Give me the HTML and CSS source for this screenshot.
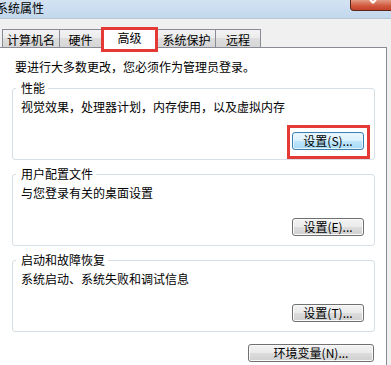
FILE: index.html
```html
<!DOCTYPE html>
<html lang="zh-CN">
<head>
<meta charset="utf-8">
<title>系统属性</title>
<link rel="stylesheet" href="styles.css">
</head>
<body>
<div class="titlebar">
  <span class="title">系统属性</span>
  <div class="close">
    <svg class="close-x" width="14" height="8" viewBox="0 0 14 8"><path d="M3 -3 L8 3 M13 -3 L8 3" stroke="#fff" stroke-width="2" fill="none"/></svg>
  </div>
</div>
<div class="window">
  <div class="tabs">
    <div class="tab t1">计算机名</div>
    <div class="tab t2">硬件</div>
    <div class="tab active">高级<span class="mark mark-tab"></span></div>
    <div class="tab t4">系统保护</div>
    <div class="tab t5">远程</div>
  </div>
  <div class="panel">
    <div class="intro">要进行大多数更改，您必须作为管理员登录。</div>
    <fieldset class="group">
      <legend>性能</legend>
      <div class="desc">视觉效果，处理器计划，内存使用，以及虚拟内存</div>
      <div class="actions"><button class="btn btn-hot">设置(S)...<span class="mark mark-btn"></span></button></div>
    </fieldset>
    <fieldset class="group">
      <legend>用户配置文件</legend>
      <div class="desc">与您登录有关的桌面设置</div>
      <div class="actions"><button class="btn">设置(E)...</button></div>
    </fieldset>
    <fieldset class="group">
      <legend>启动和故障恢复</legend>
      <div class="desc">系统启动、系统失败和调试信息</div>
      <div class="actions"><button class="btn">设置(T)...</button></div>
    </fieldset>
    <div class="env-row"><button class="btn btn-env">环境变量(N)...</button></div>
  </div>
</div>
</body>
</html>
```

FILE: styles.css
```css
* { box-sizing: border-box; }
html, body { margin: 0; padding: 0; }
body {
  width: 391px;
  height: 365px;
  overflow: hidden;
  background: #f0f0f0;
  font-family: "Noto Sans CJK SC", "Noto Sans", sans-serif;
  font-size: 12px;
  color: #000;
  position: relative;
}
.titlebar {
  height: 19px;
  background: linear-gradient(#d3e3f3, #c3d7ec);
  border-bottom: 1px solid #b6c6d6;
  position: relative;
}
.title {
  display: block;
  margin-left: -4px;
  line-height: 15px;
  font-size: 12px;
  letter-spacing: 0;
}
.close {
  position: absolute;
  top: 0;
  right: -6px;
  width: 47px;
  height: 11px;
  background: linear-gradient(#e39a84, #d0573b 60%, #c2432a);
  border: 1px solid #5e2417;
  border-top: none;
  border-bottom-left-radius: 4px;
}
.close-x { position: absolute; left: 14px; top: 0; }
.window { padding-top: 8px; }
.tabs {
  display: flex;
  align-items: flex-end;
  height: 20px;
  padding-left: 2px;
  position: relative;
  z-index: 2;
}
.tab {
  height: 18px;
  border: 1px solid #898c95;
  border-bottom: none;
  background: linear-gradient(#f3f3f3, #ebebeb 50%, #dddddd 50%, #d6d6d6);
  text-align: center;
  line-height: 18px;
  padding-top: 1px;
  white-space: nowrap;
}
.t1 { width: 58px; }
.t2 { width: 43px; margin-left: -1px; }
.active {
  width: 57px;
  height: 21px;
  margin-left: -1px;
  margin-bottom: -1px;
  background: #fff;
  line-height: 18px;
  padding-top: 1px;
  position: relative;
  z-index: 3;
}
.t4 { width: 59px; margin-left: -1px; }
.t5 { width: 46px; margin-left: -1px; }
.mark {
  position: absolute;
  border: 3px solid #e53935;
  pointer-events: none;
}
.mark-tab { left: -1px; top: -1px; width: 57px; height: 25px; }
.panel {
  width: 387px;
  background: #fff;
  border: 1px solid #898c95;
  border-left: none;
  height: 330px;
  padding: 12px 11px 0 12px;
  position: relative;
  z-index: 1;
}
.intro { margin-left: 3px; line-height: 14px; }
.group {
  margin: 8px 0 0;
  border: 1px solid #d5dfe5;
  border-radius: 3px;
  padding: 6px 10px 9px 8px;
  min-width: 0;
}
.group legend {
  margin-left: -5px;
  padding: 0 3px 0 5px;
  line-height: 12px;
}
.desc { line-height: 14px; }
.actions {
  display: flex;
  justify-content: flex-end;
  margin-top: 18px;
}
.btn {
  width: 72px;
  height: 18px;
  padding: 0;
  font-family: inherit;
  font-size: 12px;
  line-height: 16px;
  color: #000;
  border: 1px solid #707070;
  border-radius: 3px;
  background: linear-gradient(#f2f2f2, #ebebeb 50%, #dddddd 50%, #cfcfcf);
  box-shadow: inset 0 0 0 1px #fbfbfb;
  position: relative;
}
.btn-hot {
  border-color: #3c7fb1;
  background: linear-gradient(#eaf6fd, #d9f0fc 50%, #bee6fd 50%, #a7d9f5);
  box-shadow: inset 0 0 0 1px #e6f4fc;
}
.mark-btn { left: -6px; top: -8px; width: 83px; height: 34px; }
.env-row {
  display: flex;
  justify-content: flex-end;
  margin-top: 12px;
  padding-right: 1px;
}
.btn-env { width: 126px; }
```
